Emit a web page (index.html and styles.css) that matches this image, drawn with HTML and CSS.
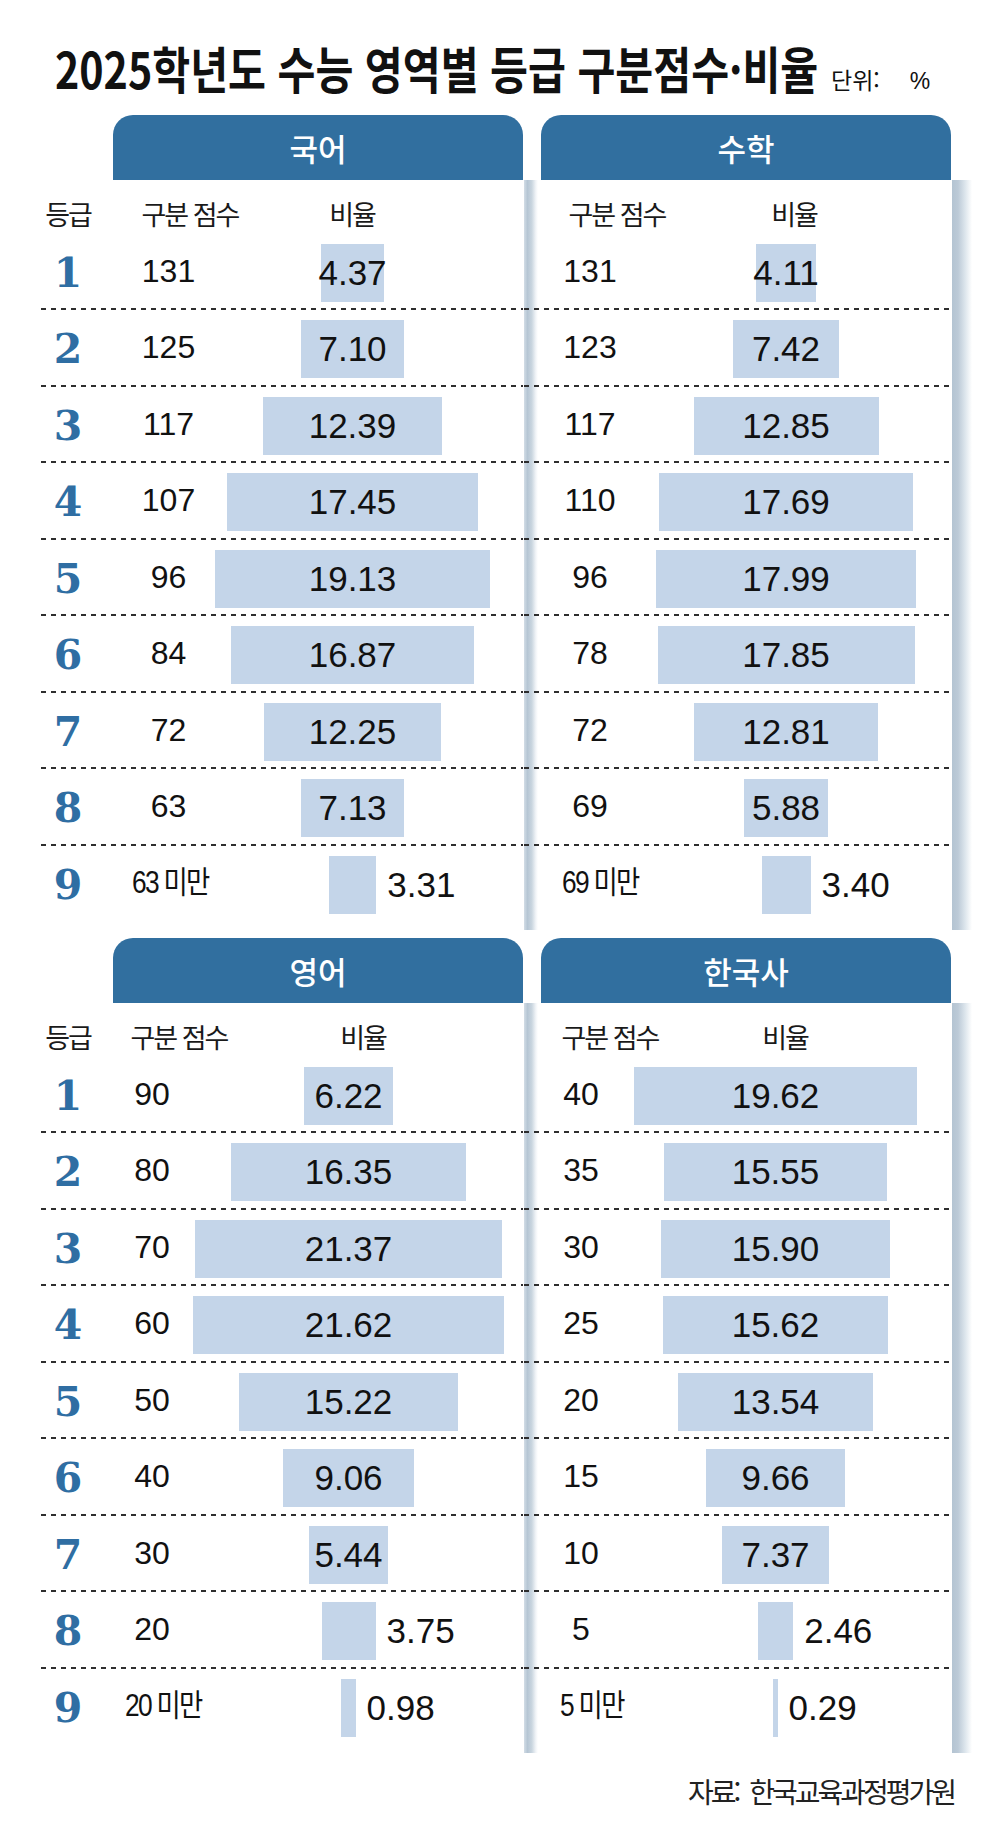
FILE: index.html
```html
<!DOCTYPE html>
<html lang="ko">
<head>
<meta charset="utf-8">
<title>2025학년도 수능 영역별 등급 구분점수·비율</title>
<link rel="stylesheet" href="styles.css">
</head>
<body>
<div class="page">
  <header class="title-row">
    <div class="title-box"><h1 class="title">2025학년도 수능 영역별 등급 구분점수·비율</h1></div>
    <span class="unit">단위:<span class="pct">%</span></span>
  </header>

  <section class="block">
    <div class="panel left kor">
      <div class="tab">국어</div>
      <div class="body">
        <div class="head"><span>등급</span><span>구분 점수</span><span>비율</span></div>
        <div class="row"><span class="grade">1</span><span class="score">131</span><span class="ratio"><span class="bar" style="width:62.9px"><span class="val">4.37</span></span></span></div>
        <div class="row"><span class="grade">2</span><span class="score">125</span><span class="ratio"><span class="bar" style="width:102.2px"><span class="val">7.10</span></span></span></div>
        <div class="row"><span class="grade">3</span><span class="score">117</span><span class="ratio"><span class="bar" style="width:178.4px"><span class="val">12.39</span></span></span></div>
        <div class="row"><span class="grade">4</span><span class="score">107</span><span class="ratio"><span class="bar" style="width:251.3px"><span class="val">17.45</span></span></span></div>
        <div class="row"><span class="grade">5</span><span class="score">96</span><span class="ratio"><span class="bar" style="width:275.5px"><span class="val">19.13</span></span></span></div>
        <div class="row"><span class="grade">6</span><span class="score">84</span><span class="ratio"><span class="bar" style="width:242.9px"><span class="val">16.87</span></span></span></div>
        <div class="row"><span class="grade">7</span><span class="score">72</span><span class="ratio"><span class="bar" style="width:176.4px"><span class="val">12.25</span></span></span></div>
        <div class="row"><span class="grade">8</span><span class="score">63</span><span class="ratio"><span class="bar" style="width:102.7px"><span class="val">7.13</span></span></span></div>
        <div class="row last"><span class="grade">9</span><span class="score under">63 미만</span><span class="ratio"><span class="bar small" style="width:47.7px"><span class="val">3.31</span></span></span></div>
      </div>
    </div>
    <div class="panel right math">
      <div class="tab">수학</div>
      <div class="body">
        <div class="head"><span>구분 점수</span><span>비율</span></div>
        <div class="row"><span class="score">131</span><span class="ratio"><span class="bar" style="width:59.2px"><span class="val">4.11</span></span></span></div>
        <div class="row"><span class="score">123</span><span class="ratio"><span class="bar" style="width:106.8px"><span class="val">7.42</span></span></span></div>
        <div class="row"><span class="score">117</span><span class="ratio"><span class="bar" style="width:185px"><span class="val">12.85</span></span></span></div>
        <div class="row"><span class="score">110</span><span class="ratio"><span class="bar" style="width:254.7px"><span class="val">17.69</span></span></span></div>
        <div class="row"><span class="score">96</span><span class="ratio"><span class="bar" style="width:259.1px"><span class="val">17.99</span></span></span></div>
        <div class="row"><span class="score">78</span><span class="ratio"><span class="bar" style="width:257px"><span class="val">17.85</span></span></span></div>
        <div class="row"><span class="score">72</span><span class="ratio"><span class="bar" style="width:184.5px"><span class="val">12.81</span></span></span></div>
        <div class="row"><span class="score">69</span><span class="ratio"><span class="bar" style="width:84.7px"><span class="val">5.88</span></span></span></div>
        <div class="row last"><span class="score under">69 미만</span><span class="ratio"><span class="bar small" style="width:49px"><span class="val">3.40</span></span></span></div>
      </div>
    </div>
  </section>

  <section class="block second">
    <div class="panel left eng">
      <div class="tab">영어</div>
      <div class="body">
        <div class="head"><span>등급</span><span>구분 점수</span><span>비율</span></div>
        <div class="row"><span class="grade">1</span><span class="score">90</span><span class="ratio"><span class="bar" style="width:89.6px"><span class="val">6.22</span></span></span></div>
        <div class="row"><span class="grade">2</span><span class="score">80</span><span class="ratio"><span class="bar" style="width:235.4px"><span class="val">16.35</span></span></span></div>
        <div class="row"><span class="grade">3</span><span class="score">70</span><span class="ratio"><span class="bar" style="width:307.7px"><span class="val">21.37</span></span></span></div>
        <div class="row"><span class="grade">4</span><span class="score">60</span><span class="ratio"><span class="bar" style="width:311.3px"><span class="val">21.62</span></span></span></div>
        <div class="row"><span class="grade">5</span><span class="score">50</span><span class="ratio"><span class="bar" style="width:219.2px"><span class="val">15.22</span></span></span></div>
        <div class="row"><span class="grade">6</span><span class="score">40</span><span class="ratio"><span class="bar" style="width:130.5px"><span class="val">9.06</span></span></span></div>
        <div class="row"><span class="grade">7</span><span class="score">30</span><span class="ratio"><span class="bar" style="width:78.3px"><span class="val">5.44</span></span></span></div>
        <div class="row"><span class="grade">8</span><span class="score">20</span><span class="ratio"><span class="bar small" style="width:54px"><span class="val">3.75</span></span></span></div>
        <div class="row last"><span class="grade">9</span><span class="score under">20 미만</span><span class="ratio"><span class="bar small" style="width:14.1px"><span class="val">0.98</span></span></span></div>
      </div>
    </div>
    <div class="panel right hist">
      <div class="tab">한국사</div>
      <div class="body">
        <div class="head"><span>구분 점수</span><span>비율</span></div>
        <div class="row"><span class="score">40</span><span class="ratio"><span class="bar" style="width:282.5px"><span class="val">19.62</span></span></span></div>
        <div class="row"><span class="score">35</span><span class="ratio"><span class="bar" style="width:223.9px"><span class="val">15.55</span></span></span></div>
        <div class="row"><span class="score">30</span><span class="ratio"><span class="bar" style="width:229px"><span class="val">15.90</span></span></span></div>
        <div class="row"><span class="score">25</span><span class="ratio"><span class="bar" style="width:224.9px"><span class="val">15.62</span></span></span></div>
        <div class="row"><span class="score">20</span><span class="ratio"><span class="bar" style="width:195px"><span class="val">13.54</span></span></span></div>
        <div class="row"><span class="score">15</span><span class="ratio"><span class="bar" style="width:139.1px"><span class="val">9.66</span></span></span></div>
        <div class="row"><span class="score">10</span><span class="ratio"><span class="bar" style="width:106.1px"><span class="val">7.37</span></span></span></div>
        <div class="row"><span class="score">5</span><span class="ratio"><span class="bar small" style="width:35.4px"><span class="val">2.46</span></span></span></div>
        <div class="row last"><span class="score under">5 미만</span><span class="ratio"><span class="bar small" style="width:4.2px"><span class="val">0.29</span></span></span></div>
      </div>
    </div>
  </section>

  <p class="source">자료: 한국교육과정평가원</p>
</div>
</body>
</html>
```

FILE: styles.css
```css
* {
  box-sizing: border-box;
  margin: 0;
  padding: 0;
}

body {
  margin: 0;
  background: #ffffff;
  font-family: "Noto Sans CJK KR", "Noto Sans", sans-serif;
  color: #111111;
}

.page {
  width: 1004px;
  height: 1830px;
  padding-left: 41px;
  overflow: hidden;
}

/* ---------- title ---------- */
.title-row {
  display: flex;
  align-items: baseline;
  height: 115px;
  padding-top: 42px;
  padding-left: 14px;
}

.title-box {
  width: 776px;
  flex: none;
  white-space: nowrap;
}

.title {
  display: inline-block;
  font-size: 50px;
  line-height: 50px;
  font-weight: 700;
  color: #111111;
  white-space: nowrap;
  transform: scaleX(0.824);
  transform-origin: left center;
}

.unit {
  font-size: 23px;
  line-height: 23px;
  color: #111111;
  white-space: nowrap;
}

.unit .pct {
  font-family: "Liberation Sans", Arial, sans-serif;
  margin-left: 30px;
}

/* ---------- blocks ---------- */
.block {
  display: flex;
  gap: 1px;
}

.block.second {
  margin-top: 8px;
}

.panel.left {
  width: 482px;
  flex: none;
}

.panel.right {
  width: 448px;
  flex: none;
}

.tab {
  height: 65px;
  width: 410px;
  background: #316f9f;
  color: #ffffff;
  border-radius: 20px 20px 0 0;
  font-size: 31px;
  font-weight: 500;
  line-height: 65px;
  text-align: center;
}

.panel.left .tab {
  margin-left: 72px;
}

.panel.right .tab {
  margin-left: 17px;
}

.body {
  position: relative;
  padding-bottom: 8px;
}

.panel.right .body {
  padding-right: 20px;
}

.panel.right .body::before,
.panel.right .body::after {
  content: "";
  position: absolute;
  top: 0;
  bottom: 0;
  z-index: 0;
}

.panel.right .body::before {
  left: 0;
  width: 14px;
  background: linear-gradient(to right, #d3dde6 0%, #b6c6d4 25%, #c9d5df 55%, #f2f5f8 85%, #ffffff 100%);
}

.panel.right .body::after {
  right: 0;
  width: 20px;
  background: linear-gradient(to right, #b4c4d2 0%, #bccad7 30%, #dce5ec 65%, #ffffff 100%);
}

/* ---------- header ---------- */
.head {
  position: relative;
  z-index: 1;
  display: grid;
  height: 53.5px;
  padding-top: 20px;
  font-size: 27px;
  line-height: 27px;
  letter-spacing: -2px;
  color: #1a1a1a;
}

.head span {
  text-align: center;
  white-space: nowrap;
}

.kor .head { grid-template-columns: 54px 190px 134px 1fr; }
.eng .head { grid-template-columns: 54px 168px 200px 1fr; }
.math .head { grid-template-columns: 186px 168px 1fr; }
.hist .head { grid-template-columns: 172px 178px 1fr; }

/* ---------- rows ---------- */
.row {
  position: relative;
  z-index: 1;
  display: grid;
  align-items: center;
  height: 76.5px;
  padding-top: 10px;
  padding-bottom: 8.5px;
  background: repeating-linear-gradient(to right, #2e2e2e 0 5px, transparent 5px 10px) left bottom / 100% 2px no-repeat;
}

.row.last {
  background: none;
}

.kor .row { grid-template-columns: 54px 147px 221px 1fr; }
.eng .row { grid-template-columns: 54px 114px 279px 1fr; }
.math .row { grid-template-columns: 132px 260px 1fr; }
.hist .row { grid-template-columns: 114px 275px 1fr; }

.grade {
  height: 58px;
  line-height: 58px;
  text-align: center;
  font-family: "DejaVu Serif", "Liberation Serif", serif;
  font-weight: 700;
  font-size: 41px;
  color: #2f6ea3;
}

.score {
  height: 58px;
  line-height: 54px;
  text-align: center;
  font-family: "Liberation Sans", Arial, sans-serif;
  font-size: 32px;
  color: #111111;
  white-space: nowrap;
}

.score.under {
  text-align: left;
  font-family: "Liberation Sans", "Noto Sans CJK KR", sans-serif;
  font-size: 31px;
  letter-spacing: -2px;
  transform: scaleX(0.85);
  transform-origin: left center;
}

.kor .score.under { padding-left: 43.5px; }
.eng .score.under { padding-left: 35.3px; }
.math .score.under { padding-left: 44.7px; }
.hist .score.under { padding-left: 42.4px; }

.ratio {
  display: flex;
  justify-content: center;
  height: 58px;
  min-width: 0;
}

.bar {
  position: relative;
  flex: none;
  display: flex;
  justify-content: center;
  height: 58px;
  background: #c4d5e9;
}

.val {
  flex: none;
  font-family: "Liberation Sans", Arial, sans-serif;
  font-size: 35px;
  line-height: 58px;
  color: #111111;
  white-space: nowrap;
}

.bar.small .val {
  position: absolute;
  top: 0;
  left: calc(100% + 11px);
}

/* ---------- source ---------- */
.source {
  margin-top: 24px;
  padding-right: 50px;
  text-align: right;
  font-size: 28px;
  line-height: 28px;
  letter-spacing: -3px;
  word-spacing: 6px;
  color: #222222;
}
```
